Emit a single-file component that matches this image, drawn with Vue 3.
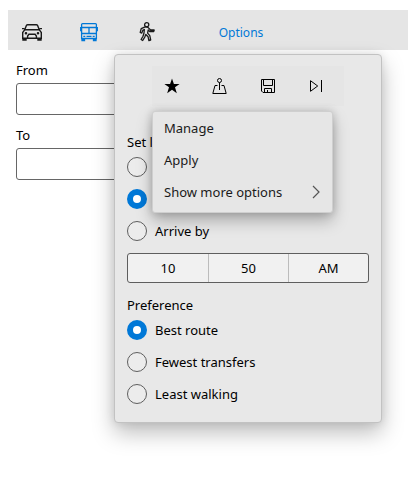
<script setup>
import { ref } from 'vue'

const mode = ref('transit')
const from = ref('')
const to = ref('')
const timing = ref('depart')
const preference = ref('best')

const timings = [
  { id: 'now', name: 'Leave now' },
  { id: 'depart', name: 'Depart at' },
  { id: 'arrive', name: 'Arrive by', label: 'Arrive by' },
]
const preferences = [
  { id: 'best', label: 'Best route' },
  { id: 'transfers', label: 'Fewest transfers' },
  { id: 'walking', label: 'Least walking' },
]
const time = ['10', '50', 'AM']
</script>

<template>
  <div class="page">
    <header class="modes">
      <button class="mode" :class="{ active: mode === 'drive' }" type="button" aria-label="Drive" @click="mode = 'drive'">
        <svg width="22" height="20" viewBox="-2 0 22 20" fill="none" stroke="currentColor" stroke-width="1.4">
          <path d="M2.6 8 4.400 3.600Q4.700 2.700 5.700 2.700h8.600q1 0 1.300.9L17.400 8" />
          <path d="M2.800 7.700h14.400L19.300 10.500v5.800H.7v-5.800z" />
          <path d="M0 6.600h2.700M17.300 6.600H20" />
          <path d="M5.600 16V14l1.300-1.700h6.200l1.300 1.700v2" />
          <path d="M1 16.500v1.600h3v-1.600M16 16.500v1.600h3v-1.600" fill="currentColor" />
          <circle cx="4" cy="11.300" r=".6" fill="currentColor" />
          <circle cx="16" cy="11.300" r=".6" fill="currentColor" />
        </svg>
      </button>
      <button class="mode" :class="{ active: mode === 'transit' }" type="button" aria-label="Transit" @click="mode = 'transit'">
        <svg width="18" height="20" viewBox="0 0 18 20" fill="none" stroke="currentColor" stroke-width="1.300">
          <path d="M1.600 16.500V2.600Q1.600 1.600 2.600 1.600h12.800q1 0 1 1v13.900z" />
          <path d="M1.600 5.500h14.800M1.600 11.500h14.800M9 5.500v6" />
          <path d="M.7 5v4.200M17.300 5v4.200" />
          <path d="M3.300 14.300h2M12.700 14.300h2M6.500 14.300h5" />
          <path d="M2 17v1.500h2.500V17M13.500 17v1.500H16V17" fill="currentColor" />
        </svg>
      </button>
      <button class="mode" :class="{ active: mode === 'walk' }" type="button" aria-label="Walk" @click="mode = 'walk'">
        <svg width="16" height="20" viewBox="0 0 16 20" fill="none" stroke="currentColor" stroke-width="1.300" stroke-linejoin="round">
          <circle cx="7.700" cy="2.800" r="2.100" />
          <path d="M5.600 5.100 2.200 6.700 1.200 10.500l1.600.6 1.100-3 1.500-.6-.5 4-.9 2.700-1.900 3.300 1.600 1 2.200-3.700.9-2.300 2.300 2.300.8 3.700 1.800-.5-.9-4.400-2.200-2.500.6-3.100 1.600 1.500h3.900l.5-1.500h-3.600L9.200 5.600Q7.700 4.400 5.600 5.100z" />
        </svg>
      </button>
      <button class="options" type="button">Options</button>
    </header>

    <form class="route" @submit.prevent>
      <label for="from">From</label>
      <input id="from" v-model="from" type="text" />
      <label for="to">To</label>
      <input id="to" v-model="to" type="text" />
    </form>

    <section class="panel">
      <div class="toolbar">
        <button type="button" aria-label="Favorites">
          <svg width="16" height="16" viewBox="0 0 16 16" fill="currentColor">
            <path d="m8 .4 1.900 5.500h5.700L11 9.300l1.800 5.900L8 11.700l-4.800 3.500L5 9.300.4 5.900h5.700z" />
          </svg>
        </button>
        <button type="button" aria-label="Places">
          <svg width="16" height="16" viewBox="0 0 16 16" fill="none" stroke="currentColor">
            <circle cx="7.500" cy="2.500" r="2" />
            <path d="M7.500 4.500V12M5.500 7.500H3L.8 15.500h13.400L12 7.500H9.500" />
          </svg>
        </button>
        <button type="button" aria-label="Save">
          <svg width="16" height="16" viewBox="0 0 16 16" fill="none" stroke="currentColor">
            <path d="M1.500 1.500h13v13H3L1.500 13zM3.500 1.500v6h9v-6M4.500 14.500v-4h7v4M7.500 12v2.500" />
          </svg>
        </button>
        <button type="button" aria-label="Next step">
          <svg width="16" height="16" viewBox="0 0 16 16" fill="none" stroke="currentColor">
            <path d="M2.500 2.700v10.600L9.700 8zM13.500 2v12" />
          </svg>
        </button>
      </div>

      <fieldset>
        <legend>Set l</legend>
        <label v-for="item in timings" :key="item.id" class="choice">
          <input v-model="timing" type="radio" name="timing" :value="item.id" :aria-label="item.name" />
          <span v-if="item.label">{{ item.label }}</span>
        </label>
      </fieldset>

      <div class="time">
        <button v-for="part in time" :key="part" type="button">{{ part }}</button>
      </div>

      <fieldset>
        <legend>Preference</legend>
        <label v-for="item in preferences" :key="item.id" class="choice">
          <input v-model="preference" type="radio" name="preference" :value="item.id" />
          <span>{{ item.label }}</span>
        </label>
      </fieldset>

      <div class="menu" role="menu">
        <button type="button" role="menuitem">Manage</button>
        <button type="button" role="menuitem">Apply</button>
        <button type="button" role="menuitem">
          <span>Show more options</span>
          <svg width="8" height="14" viewBox="0 0 8 14" fill="none" stroke="#555" stroke-width="1.200">
            <path d="m1 1 6 6-6 6" />
          </svg>
        </button>
      </div>
    </section>
  </div>
</template>

<style>
body {
  background: #fff;
}
</style>

<style scoped>
.page {
  position: relative;
  box-sizing: border-box;
  min-height: 100vh;
  padding: 10px 8px;
  font: 13px/20px "Noto Sans", sans-serif;
  color: #000;
}
.page * {
  box-sizing: border-box;
}
button {
  margin: 0;
  padding: 0;
  border: 0;
  background: none;
  color: inherit;
  font: inherit;
}
svg {
  display: block;
  flex: none;
}
.modes {
  display: flex;
  align-items: center;
  height: 40px;
  padding-right: 108px;
  background: #e5e5e5;
}
.mode {
  display: flex;
  justify-content: center;
  align-items: center;
  width: 58px;
  height: 40px;
  padding: 4px 12px 0 0;
  color: #1a1a1a;
}
.mode.active {
  color: #0078d7;
}
.options {
  flex: 1;
  padding-top: 6px;
  font-size: 12px;
  color: #0078d7;
}
.route {
  display: flex;
  flex-direction: column;
  padding: 10px 40px 0 8px;
}
.route input {
  width: 100%;
  height: 32px;
  margin: 3px 0 10px;
  padding: 0 10px;
  border: 1px solid #666;
  border-radius: 3px;
  background: #fff;
  font: inherit;
}
.panel {
  position: absolute;
  top: 54px;
  right: 34px;
  width: 268px;
  padding: 11px 12px 12px;
  border: 1px solid #c2c2c2;
  border-radius: 4px;
  background: #e8e8e8;
  box-shadow: 0 10px 22px rgba(0, 0, 0, 0.26), 0 0 10px rgba(0, 0, 0, 0.1);
}
.toolbar {
  display: flex;
  justify-content: center;
  margin-bottom: 27px;
}
.toolbar button {
  display: flex;
  justify-content: center;
  align-items: center;
  width: 48px;
  height: 40px;
  padding-right: 8px;
  background: #e5e5e5;
}
fieldset {
  min-width: 0;
  margin: 0;
  padding: 0;
  border: 0;
}
legend {
  padding: 0;
  line-height: 18px;
}
.choice {
  display: flex;
  align-items: center;
  gap: 8px;
  height: 32px;
}
.choice input {
  appearance: none;
  flex: none;
  width: 20px;
  height: 20px;
  margin: 0;
  border: 1px solid #5e5e5e;
  border-radius: 50%;
  background: #ececec;
}
.choice input:checked {
  border: 6px solid #0078d7;
  background: #fff;
}
.time {
  display: grid;
  grid-template-columns: repeat(3, 1fr);
  height: 30px;
  margin: 6px 0 13px;
  border: 1px solid #5e5e5e;
  border-radius: 3px;
  background: #f1f1f1;
}
.time button + button {
  border-left: 1px solid #bcbcbc;
}
.menu {
  position: absolute;
  top: 56px;
  left: 37px;
  width: 181px;
  padding: 0 0 4px;
  border: 1px solid #cfcfcf;
  border-radius: 3px;
  background: #e6e6e6;
  box-shadow: 0 8px 16px rgba(0, 0, 0, 0.26), 0 0 8px rgba(0, 0, 0, 0.18);
}
.menu button {
  display: flex;
  justify-content: space-between;
  align-items: center;
  width: 100%;
  height: 32px;
  padding: 0 12px 0 11px;
  color: #1a1a1a;
  text-align: left;
}
</style>
